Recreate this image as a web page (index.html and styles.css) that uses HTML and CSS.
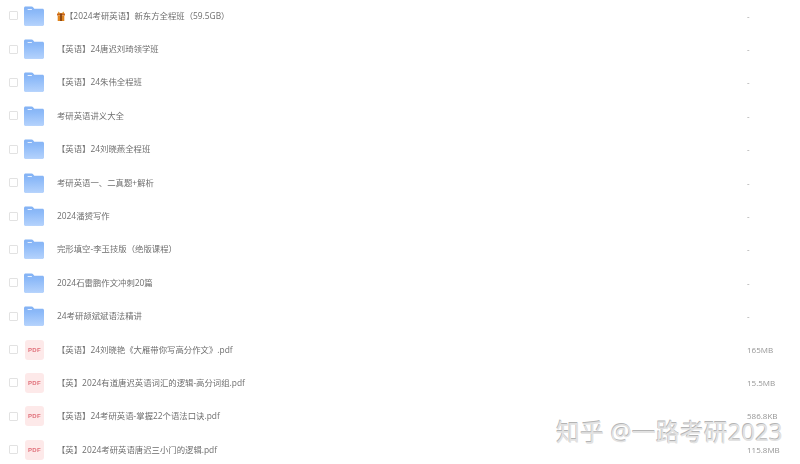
FILE: index.html
```html
<!DOCTYPE html>
<html lang="zh-CN">
<head>
<meta charset="UTF-8">
<meta name="viewport" content="width=device-width, initial-scale=1.0">
<title>文件列表</title>
<link rel="stylesheet" href="styles.css">
</head>
<body>
  <svg class="defs" width="0" height="0">
    <defs>
      <linearGradient id="folderBack" x1="0" y1="0" x2="0" y2="1">
        <stop offset="0" stop-color="#82b2f5"/>
        <stop offset="1" stop-color="#a9cafa"/>
      </linearGradient>
      <linearGradient id="folderFront" x1="0" y1="0" x2="0" y2="1">
        <stop offset="0" stop-color="#8ab8f8"/>
        <stop offset="1" stop-color="#b4d2fc"/>
      </linearGradient>
      <symbol id="folder" viewBox="0 0 20 20">
        <path d="M1.5 0.5h6c.8 0 1.3.4 1.8 1l1 1.2H18.5c.8 0 1.5.7 1.5 1.5V18c0 1-.8 1.8-1.8 1.8H1.8C.8 19.800 0 19 0 18V2C0 1.200.7.500 1.500.500z" fill="url(#folderBack)"/>
        <path d="M0 5.500h20V18c0 1-.8 1.800-1.800 1.800H1.800C.8 19.800 0 19 0 18z" fill="url(#folderFront)"/>
        <rect x="3.500" y="3" width="4.500" height="1.100" rx=".5" fill="#e6f0ff"/>
      </symbol>
    </defs>
  </svg>

  <ul class="file-list">
    <li class="file-row">
      <span class="check"></span>
      <svg class="file-icon"><use href="#folder"/></svg>
      <span class="file-name">
        <svg class="gift" viewBox="0 0 8 10">
          <path d="M1 .5l3 2 3-2v2.500H1z" fill="#e8a33a"/>
          <rect x="0" y="2.500" width="8" height="2" fill="#c9641a"/>
          <rect x=".7" y="4.500" width="6.600" height="5.500" fill="#e0851f"/>
          <rect x="3.200" y="2.500" width="1.600" height="7.500" fill="#7a3c10"/>
        </svg>【2024考研英语】新东方全程班（59.5GB）
      </span>
      <span class="file-size">-</span>
    </li>
    <li class="file-row">
      <span class="check"></span>
      <svg class="file-icon"><use href="#folder"/></svg>
      <span class="file-name">【英语】24唐迟刘琦领学班</span>
      <span class="file-size">-</span>
    </li>
    <li class="file-row">
      <span class="check"></span>
      <svg class="file-icon"><use href="#folder"/></svg>
      <span class="file-name">【英语】24朱伟全程班</span>
      <span class="file-size">-</span>
    </li>
    <li class="file-row">
      <span class="check"></span>
      <svg class="file-icon"><use href="#folder"/></svg>
      <span class="file-name">考研英语讲义大全</span>
      <span class="file-size">-</span>
    </li>
    <li class="file-row">
      <span class="check"></span>
      <svg class="file-icon"><use href="#folder"/></svg>
      <span class="file-name">【英语】24刘晓燕全程班</span>
      <span class="file-size">-</span>
    </li>
    <li class="file-row">
      <span class="check"></span>
      <svg class="file-icon"><use href="#folder"/></svg>
      <span class="file-name">考研英语一、二真题+解析</span>
      <span class="file-size">-</span>
    </li>
    <li class="file-row">
      <span class="check"></span>
      <svg class="file-icon"><use href="#folder"/></svg>
      <span class="file-name">2024潘赟写作</span>
      <span class="file-size">-</span>
    </li>
    <li class="file-row">
      <span class="check"></span>
      <svg class="file-icon"><use href="#folder"/></svg>
      <span class="file-name">完形填空-李玉技版（绝版课程）</span>
      <span class="file-size">-</span>
    </li>
    <li class="file-row">
      <span class="check"></span>
      <svg class="file-icon"><use href="#folder"/></svg>
      <span class="file-name">2024石雷鹏作文冲刺20篇</span>
      <span class="file-size">-</span>
    </li>
    <li class="file-row">
      <span class="check"></span>
      <svg class="file-icon"><use href="#folder"/></svg>
      <span class="file-name">24考研颉斌斌语法精讲</span>
      <span class="file-size">-</span>
    </li>
    <li class="file-row">
      <span class="check"></span>
      <span class="pdf-icon">PDF</span>
      <span class="file-name">【英语】24刘晓艳《大雁带你写高分作文》.pdf</span>
      <span class="file-size">165MB</span>
    </li>
    <li class="file-row">
      <span class="check"></span>
      <span class="pdf-icon">PDF</span>
      <span class="file-name">【英】2024有道唐迟英语词汇的逻辑-高分词组.pdf</span>
      <span class="file-size">15.5MB</span>
    </li>
    <li class="file-row">
      <span class="check"></span>
      <span class="pdf-icon">PDF</span>
      <span class="file-name">【英语】24考研英语-掌握22个语法口诀.pdf</span>
      <span class="file-size">586.8KB</span>
    </li>
    <li class="file-row">
      <span class="check"></span>
      <span class="pdf-icon">PDF</span>
      <span class="file-name">【英】2024考研英语唐迟三小门的逻辑.pdf</span>
      <span class="file-size">115.8MB</span>
    </li>
  </ul>

  <div class="watermark">知乎 @一路考研2023</div>
</body>
</html>
```

FILE: styles.css
```css
html, body {
  height: 100%;
}

body {
  margin: 0;
  overflow: hidden;
  background-color: #fff;
  font-family: "Open Sans", "Noto Sans CJK SC", sans-serif;
  color: #6e6e6e;
}

.defs {
  position: absolute;
}

.file-list {
  list-style: none;
  margin: -1px 0 0;
  padding: 0;
  filter: blur(0.3px);
}

.file-row {
  display: flex;
  align-items: center;
  height: 33.4px;
  padding-left: 9px;
}

.check {
  flex: none;
  width: 7px;
  height: 7px;
  border: 1px solid #e2e2e2;
  border-radius: 1px;
}

.file-icon {
  flex: none;
  width: 20px;
  height: 20px;
  margin-left: 6px;
}

.pdf-icon {
  flex: none;
  width: 19px;
  height: 20px;
  margin-left: 7px;
  border-radius: 3px;
  background-color: #fde9e9;
  color: #e0707a;
  font-family: "Liberation Sans", sans-serif;
  font-size: 6px;
  font-weight: bold;
  letter-spacing: 0.4px;
  line-height: 20px;
  text-align: center;
}

.file-name {
  flex: none;
  width: 690px;
  margin-left: 13px;
  font-size: 8.4px;
  line-height: 12px;
  white-space: nowrap;
}

.gift {
  width: 8px;
  height: 10px;
  vertical-align: -2px;
}

.file-size {
  flex: none;
  font-size: 8px;
  line-height: 10px;
  color: #969696;
  white-space: nowrap;
}

.watermark {
  position: absolute;
  left: 556px;
  top: 420px;
  font-size: 24px;
  line-height: 24px;
  color: #e2e2e2;
  text-shadow: -0.6px -0.6px 0 #b4b4b4;
  white-space: nowrap;
}
```
